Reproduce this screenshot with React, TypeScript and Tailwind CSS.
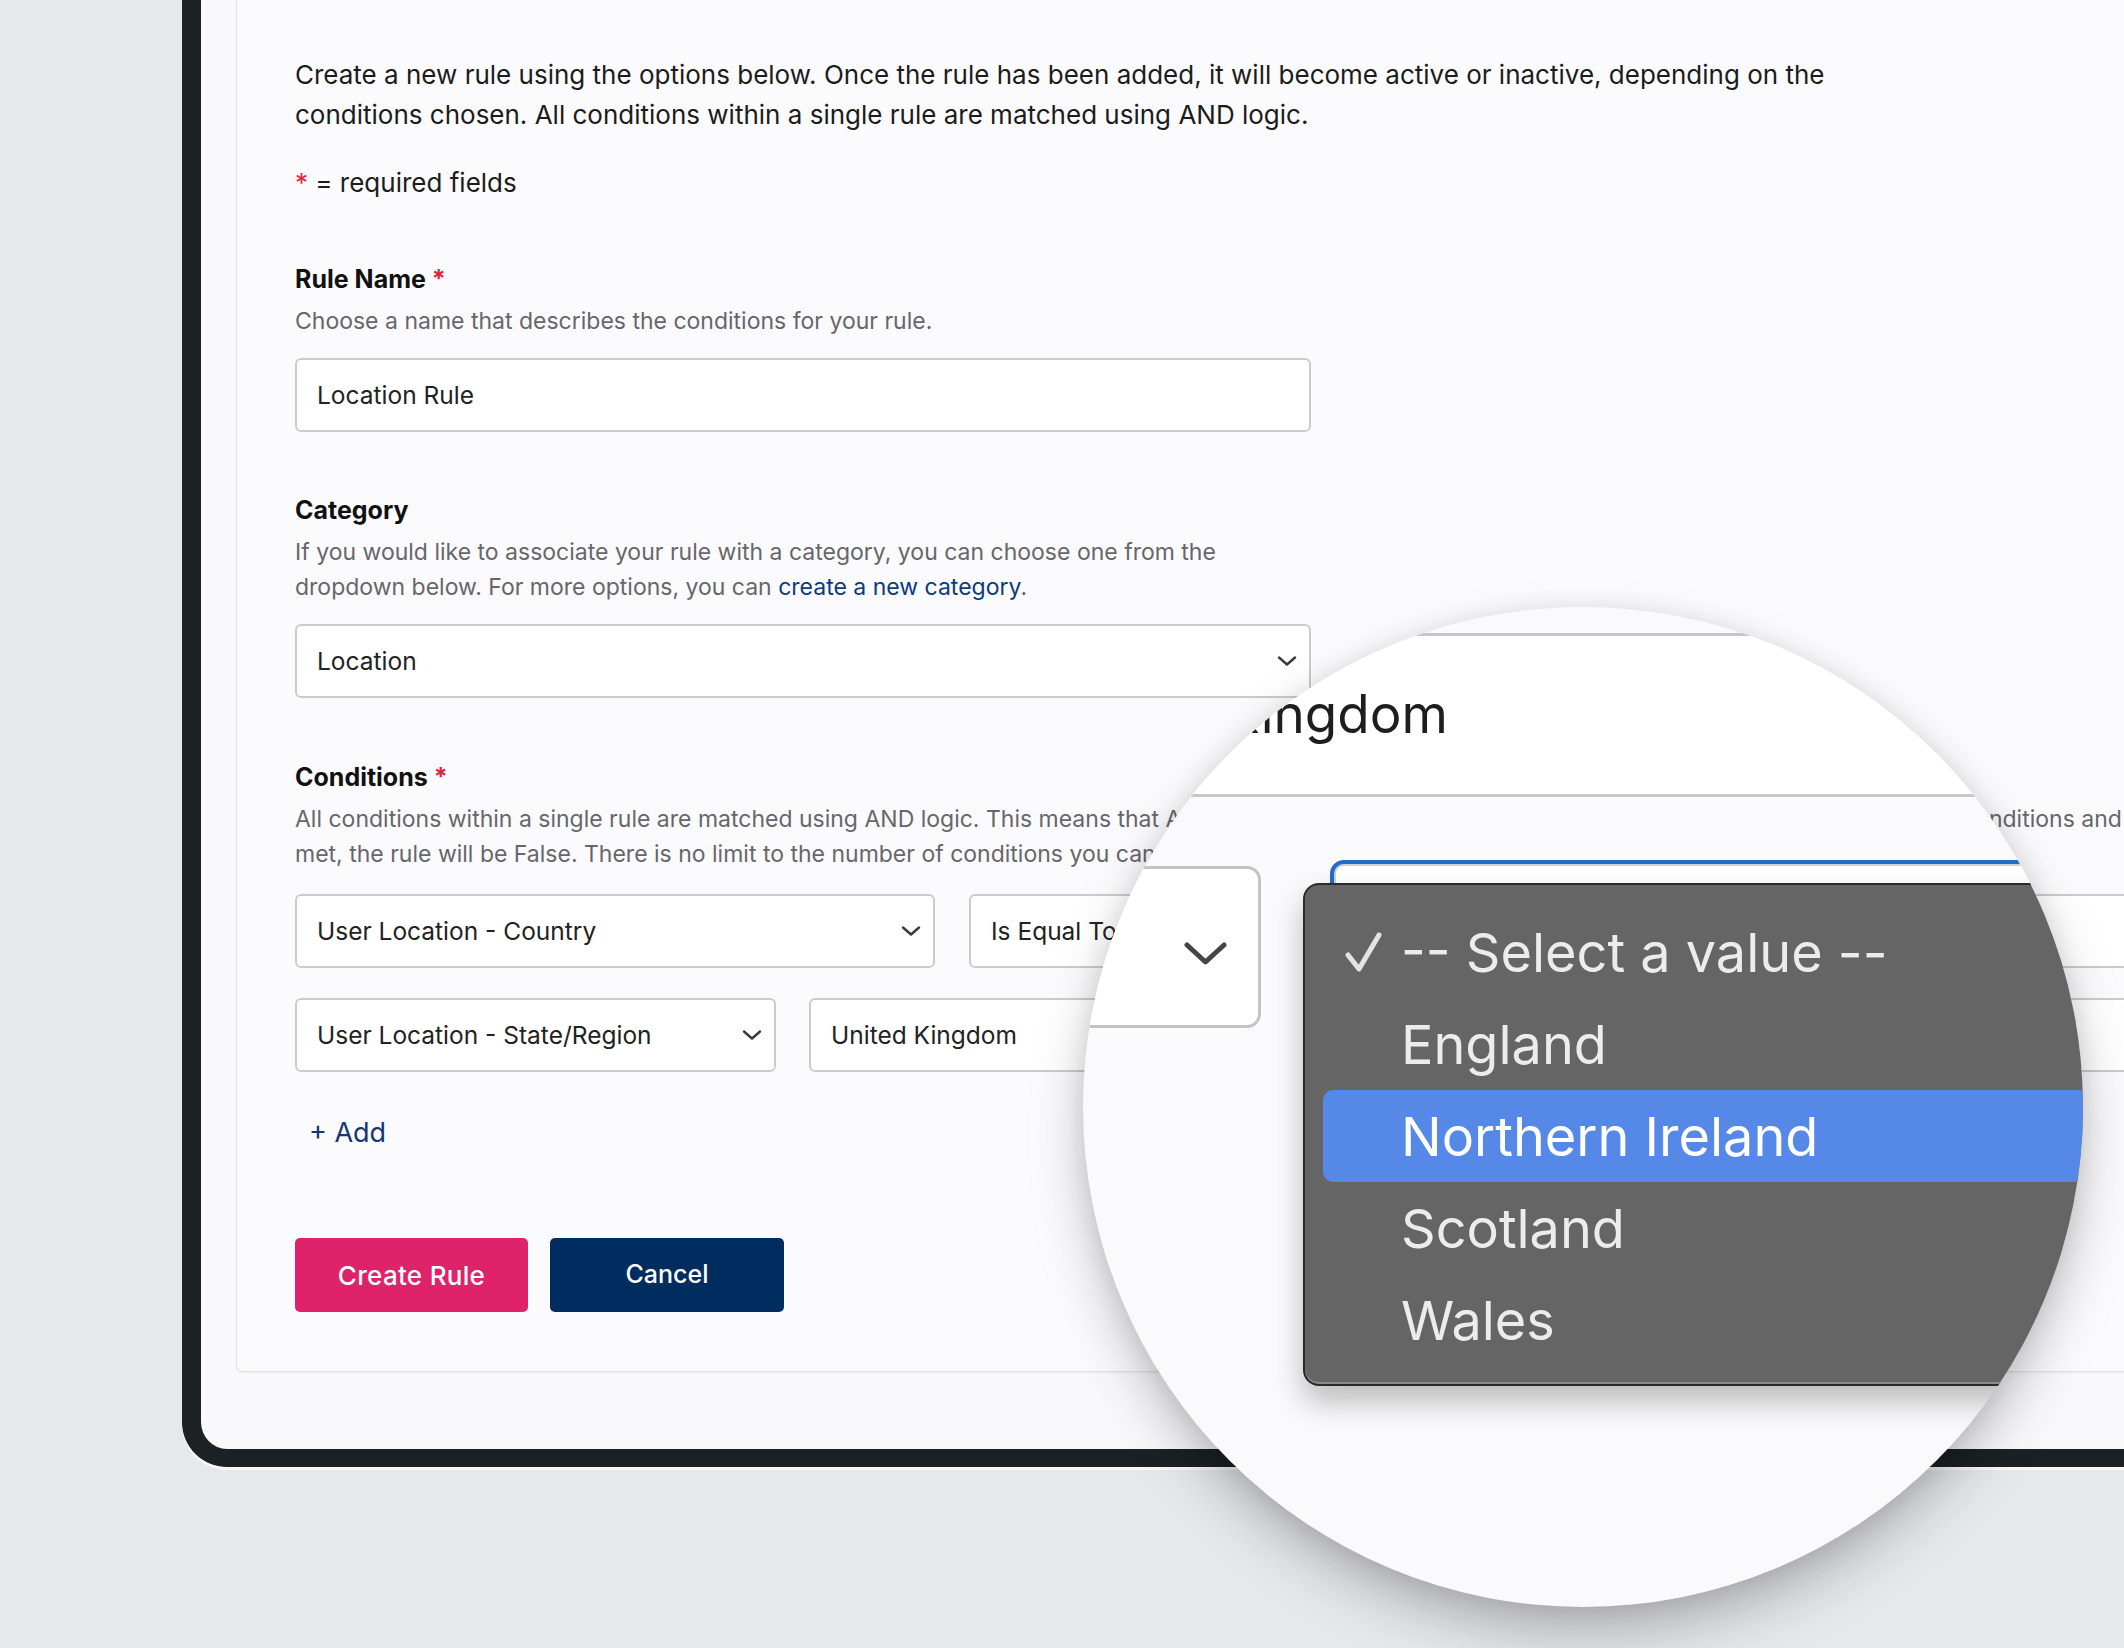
import React from 'react'

function Chevron({ className }: { className?: string }) {
  return (
    <svg viewBox="0 0 20 10" className={className} fill="none" stroke="currentColor" strokeWidth={2.4} strokeLinecap="round" strokeLinejoin="round" aria-hidden="true">
      <path d="M2 1.5l8 7 8-7" />
    </svg>
  )
}

function Check() {
  return (
    <svg viewBox="0 0 37 42" className="h-[42px] w-[37px]" fill="none" stroke="#e4e4e4" strokeWidth={5} strokeLinecap="round" strokeLinejoin="round" aria-hidden="true">
      <path d="M3 24l11 14L34 4" />
    </svg>
  )
}

function Req() {
  return <span className="ml-[6px] text-[#e0253a]">*</span>
}

function Select({ value, className }: { value: string; className: string }) {
  return (
    <div className={`flex h-[74px] shrink-0 items-center justify-between rounded-[6px] border-2 border-[#cbcbcf] bg-white pl-[20px] pr-[12px] text-[24.5px] text-[#222] ${className}`}>
      <span className="whitespace-nowrap">{value}</span>
      <Chevron className="h-[10px] w-[20px] text-[#3b3b3b]" />
    </div>
  )
}

function Input({ value, className }: { value: string; className: string }) {
  return (
    <div className={`flex h-[74px] shrink-0 items-center rounded-[6px] border-2 border-[#cbcbcf] bg-white pl-[20px] text-[24.5px] text-[#222] ${className}`}>
      <span className="whitespace-nowrap">{value}</span>
    </div>
  )
}

function Label({ text, required }: { text: string; required?: boolean }) {
  return (
    <div className="text-[25px] font-bold leading-[40px] text-[#111]">
      {text}
      {required && <Req />}
    </div>
  )
}

const options = ['-- Select a value --', 'England', 'Northern Ireland', 'Scotland', 'Wales']

function Magnifier() {
  return (
    <div className="absolute left-[1083px] top-[607px] h-[1000px] w-[1000px] overflow-hidden rounded-full bg-[#fafafc] shadow-[0_28px_60px_-6px_rgba(0,0,0,0.28),0_0_24px_rgba(0,0,0,0.08)]">
      <div className="absolute left-[-400px] top-[26px]">
        {/* value input, zoomed */}
        <div className="flex h-[164px] w-[1800px] items-center rounded-[12px] border-[3px] border-[#c6c6c8] bg-white">
          <div className="w-[762px] whitespace-nowrap text-right text-[53px] text-[#1e1e1e]">United Kingdom</div>
        </div>

        <div className="mt-[63px] flex items-start">
          <div className="mt-[6px] flex h-[162px] w-[578px] shrink-0 items-center justify-end rounded-[14px] border-[3px] border-[#c4c4c6] bg-white pr-[31px]">
            <svg viewBox="0 0 43 23" className="mt-[12px] h-[23px] w-[43px]" fill="none" stroke="#454545" strokeWidth={5} strokeLinecap="round" strokeLinejoin="round" aria-hidden="true">
              <path d="M3 3l18.5 17L40 3" />
            </svg>
          </div>

          <div className="relative ml-[69px] h-[162px] w-[1200px] shrink-0 rounded-[14px] border-[4px] border-[#1e6fc8] bg-white shadow-[inset_0_0_0_2px_#d0d0d4]">
            <div className="absolute left-[-31px] top-[19px] w-[1000px] rounded-[16px] border-2 border-[#2a2a2a] bg-[#656565] pb-[18px] pt-[21px] shadow-[0_16px_30px_rgba(0,0,0,0.25),inset_0_-2px_0_#8a8a8a]">
              {options.map((o, i) => (
                <div
                  key={o}
                  className={`ml-[18px] flex h-[92px] items-center rounded-[10px] text-[54px] ${i === 2 ? 'bg-[#5688e8] text-white' : 'text-[#ececec]'}`}
                >
                  <div className="flex w-[78px] shrink-0 justify-start pl-[22px]">{i === 0 && <Check />}</div>
                  <span className="whitespace-nowrap">{o}</span>
                </div>
              ))}
            </div>
          </div>
        </div>
      </div>
    </div>
  )
}

export default function App() {
  return (
    <div className="relative h-[1648px] w-[2124px] overflow-hidden bg-[#e7e8ec] font-['Inter',sans-serif]">
      <div className="-mt-[80px] ml-[182px] w-[2100px] rounded-bl-[45px] border-[19px] border-b-[18px] border-r-0 border-[#1b2124] bg-[#f9f9fc] pb-[77px] pl-[35px] shadow-[0_3px_0_rgba(255,255,255,0.7)]">
        <div className="rounded-[6px] border border-[#e1e1e7] bg-[#fbfbfe] pb-[59px] pl-[58px] pt-[115px] shadow-[0_1px_2px_rgba(0,0,0,0.05)]">
          <p className="whitespace-nowrap text-[26px] leading-[40px] text-[#1c1c1c]">
            Create a new rule using the options below. Once the rule has been added, it will become active or inactive, depending on the
            <br />
            conditions chosen. All conditions within a single rule are matched using AND logic.
          </p>
          <p className="mt-[28px] text-[26px] leading-[40px] text-[#1c1c1c]">
            <span className="text-[#e0253a]">*</span> = required fields
          </p>

          {/* rule name */}
          <div className="mt-[56px]">
            <Label text="Rule Name" required />
            <p className="mt-[5px] text-[23px] leading-[35px] text-[#66666b]">Choose a name that describes the conditions for your rule.</p>
            <Input value="Location Rule" className="mt-[19px] w-[1016px]" />
          </div>

          {/* category */}
          <div className="mt-[58px]">
            <Label text="Category" />
            <p className="mt-[5px] whitespace-nowrap text-[23px] leading-[35px] text-[#66666b]">
              If you would like to associate your rule with a category, you can choose one from the
              <br />
              dropdown below. For more options, you can <a className="text-[#0b3a7e]">create a new category</a>.
            </p>
            <Select value="Location" className="mt-[19px] w-[1016px]" />
          </div>

          {/* conditions */}
          <div className="mt-[59px]">
            <Label text="Conditions" required />
            <div className="mt-[5px] text-[23px] leading-[35px] text-[#66666b]">
              <div className="flex whitespace-nowrap">
                <span className="w-[1667px] shrink-0 overflow-hidden">
                  All conditions within a single rule are matched using AND logic. This means that All of the conditions must be met for the rule to be True. If one or more of the
                </span>
                <span>conditions and requirements are not</span>
              </div>
              <div className="whitespace-nowrap">met, the rule will be False. There is no limit to the number of conditions you can add to a single rule.</div>
            </div>
            <div className="mt-[22px] flex gap-[34px]">
              <Select value="User Location - Country" className="w-[640px]" />
              <Select value="Is Equal To" className="w-[320px]" />
              <Input value="United Kingdom" className="w-[900px]" />
            </div>
            <div className="mt-[30px] flex gap-[33px]">
              <Select value="User Location - State/Region" className="w-[481px]" />
              <Input value="United Kingdom" className="w-[480px]" />
              <Select value="-- Select a value --" className="w-[900px]" />
            </div>
            <button className="ml-[14px] mt-[41px] block text-[27px] leading-[40px] text-[#163571]">+ Add</button>
          </div>

          <div className="mt-[85px] flex gap-[22px]">
            <button className="h-[74px] w-[233px] rounded-[5px] bg-[#e0226b] text-[26px] font-medium tracking-[0.3px] text-white">Create Rule</button>
            <button className="h-[74px] w-[234px] rounded-[5px] bg-[#002d5f] text-[25px] font-medium text-white">Cancel</button>
          </div>
        </div>
      </div>
      <Magnifier />
    </div>
  )
}
